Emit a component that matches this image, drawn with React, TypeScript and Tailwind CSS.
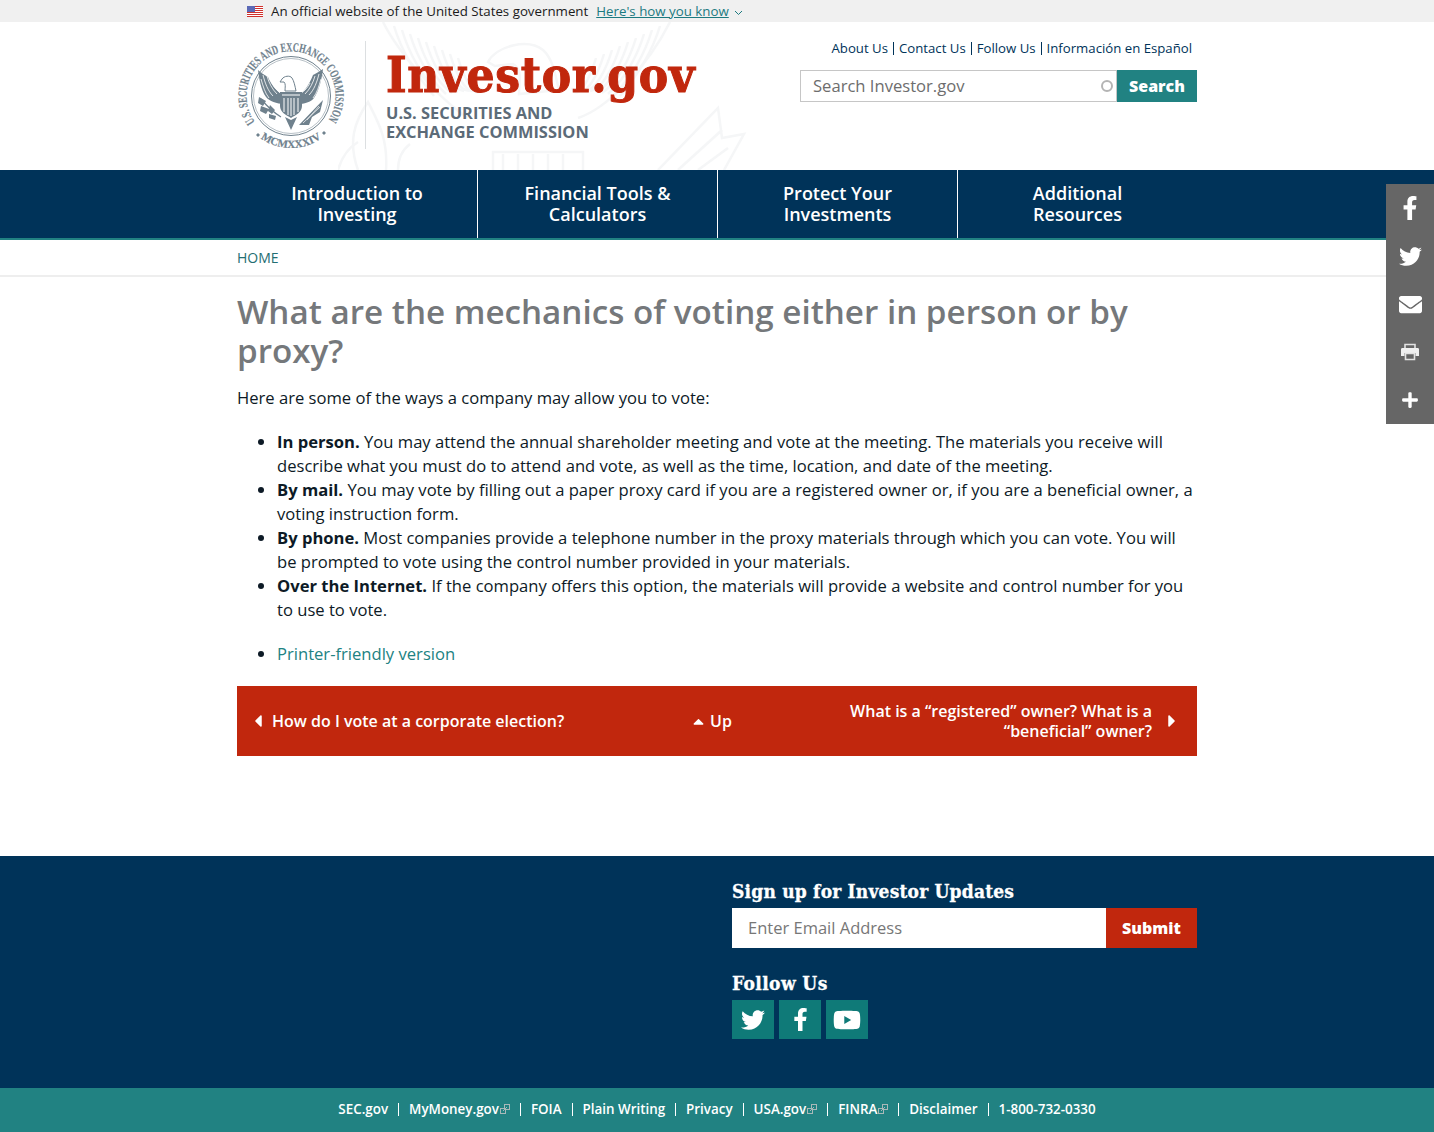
import React from "react";
import { FaFacebookF, FaTwitter, FaEnvelope, FaPlus, FaYoutube, FaCaretLeft, FaCaretRight, FaCaretUp } from "react-icons/fa";

const OS = "font-['Open_Sans',sans-serif]";
const SLAB = "font-['DejaVu_Serif_Condensed','DejaVu_Serif',serif]";

function Flag() {
  const stripes = [0, 2, 4, 6, 8, 10];
  return (
    <svg width="16" height="11" viewBox="0 0 16 11" className="shrink-0">
      <rect width="16" height="11" fill="#fff" />
      {stripes.map((y) => <rect key={y} y={y} width="16" height="1" fill="#d0312d" />)}
      <rect width="8" height="6" fill="#2d3f9e" />
      {[1, 3, 5, 7].map((x) => [1, 3, 5].map((y) => <rect key={`${x}${y}`} x={x - 0.5} y={y - 0.5} width="1" height="1" fill="#e8e8ff" />))}
    </svg>
  );
}

function Seal() {
  const c = "#6f818d";
  return (
    <svg width="110" height="110" viewBox="0 0 110 110" className="shrink-0">
      <defs>
        <path id="sealTop" d="M 18 81 A 44.5 44.5 0 1 1 90 81" />
        <path id="sealBottom" d="M 22 96 A 52 52 0 0 0 86 96" />
      </defs>
      <circle cx="54" cy="55" r="39.5" fill="none" stroke={c} strokeWidth="1" />
      <circle cx="54" cy="55" r="37.5" fill="none" stroke={c} strokeWidth=".5" />
      <text fontFamily="'Liberation Serif',serif" fontSize="12.5" fontWeight="700" fill={c} stroke={c} strokeWidth=".2">
        <textPath href="#sealTop" textLength="193" lengthAdjust="spacingAndGlyphs">U.S. SECURITIES AND EXCHANGE COMMISSION</textPath>
      </text>
      <text fontFamily="'Liberation Serif',serif" fontSize="11" fontWeight="700" fill={c} stroke={c} strokeWidth=".2">
        <textPath href="#sealBottom" startOffset="50%" textAnchor="middle">MCMXXXIV</textPath>
      </text>
      <path d="M21 92l2 2-2 2-2-2zM87 90l2 2-2 2-2-2z" fill={c} />
      {/* left wing */}
      <path d="M47 54C42 53 34 44 31 36 26 33 23 31 21 29c1 8 3 20 8 27 3 4 11 7 18 7z" fill={c} />
      <path d="M26 34c2 8 5 16 10 21M30 35c2 7 5 13 10 18M35 42c2 4 5 8 9 10M24 38c2 7 4 14 8 19" stroke="#fff" strokeWidth=".8" fill="none" />
      {/* right wing */}
      <path d="M61 54c5-1 11-10 15-20 4-2 7-4 10-6-1 9-4 22-9 29-3 4-10 6-16 6z" fill={c} />
      <path d="M82 33c-2 8-5 16-10 21M78 35c-2 7-5 13-10 18M73 42c-2 4-5 8-9 10M84 38c-2 7-4 14-8 19" stroke="#fff" strokeWidth=".8" fill="none" />
      {/* head */}
      <path d="M45 38c2-3 8-4 10-1 2 3 3 8 4 13l-11 0c0-4 1-7-1-9l-4 0z" fill="#fff" stroke={c} strokeWidth="1" />
      {/* shield */}
      <path d="M43 51h22v14c0 6-6 9-11 12-5-3-11-6-11-12z" fill={c} />
      <path d="M47 57v14M51 57v17M54 57v18M57 57v17M61 57v14" stroke="#fff" strokeWidth="1" />
      <path d="M45 54h18" stroke="#fff" strokeWidth="1" />
      {/* tail */}
      <path d="M48 76l6 13 6-13-6 3z" fill={c} />
      {/* left branch */}
      <path d="M24 58c5 6 10 12 20 18" stroke={c} strokeWidth="1.2" fill="none" />
      <path d="M22 56l7 4-3 5-5-3zM24 65l8 3-3 5-6-3zM33 64l5 5-3 4-4-3zM32 73l7 2-1 4-6-2z" fill={c} />
      {/* right arrows */}
      <path d="M62 84l24-25-3 12-8 5-3 8z" fill={c} />
      <path d="M66 82l17-16M70 79l12-14" stroke="#fff" strokeWidth=".7" />
    </svg>
  );
}

function Watermark() {
  const s = "#f5f6f7";
  const feathers = Array.from({ length: 9 });
  return (
    <svg width="410" height="148" viewBox="0 0 410 148" className="absolute left-[338px] top-[0px] pointer-events-none">
      <g fill="none" stroke={s} strokeWidth="2.5">
        <path d="M150 40c8-16 40-24 55-12 10 9 12 24 16 40l-40 4c0-14 4-24-6-30l-18 2z" />
        <path d="M155 148V130h90v18" />
        {[165, 180, 195, 210, 225].map((x) => <path key={x} d={`M${x} 132v16`} />)}
        <path d="M130 96C100 76 60 30 45 0" />
        <path d="M240 96c30-10 70-52 92-96" />
        {feathers.map((_, i) => <path key={i} d={`M${56 + i * 8} ${4 + i * 4}c6 20 18 44 ${40 - i * 2} ${70 - i * 5}`} />)}
        {feathers.map((_, i) => <path key={`r${i}`} d={`M${322 - i * 8} ${4 + i * 4}c-6 20-18 44-${40 - i * 2} ${70 - i * 5}`} />)}
        <path d="M20 148C10 120 16 100 30 80c10 20 20 36 18 68" />
        <path d="M0 148c4-14 10-22 20-28M60 148c0-12 4-20 12-26" />
        <path d="M320 148l60-62 4 30 22-4-20 36" />
        <path d="M340 148l44-40M360 148l30-22" />
      </g>
    </svg>
  );
}

function PrintIcon() {
  return (
    <svg width="20" height="18" viewBox="0 0 20 18" fill="none">
      <path d="M5 5V1.5h10V5" stroke="#e2e2e2" strokeWidth="1.6" />
      <path d="M1 6.5c0-1 .5-1.5 1.5-1.5h15c1 0 1.5.5 1.5 1.5V13h-3.5v-3h-11v3H1z" fill="#f0f0f0" />
      <path d="M5.5 10.5h9v6h-9z" stroke="#e2e2e2" strokeWidth="1.6" />
    </svg>
  );
}

function Share() {
  const items = [
    <FaFacebookF key="f" className="text-[24px]" />,
    <FaTwitter key="t" className="text-[23px]" />,
    <FaEnvelope key="e" className="text-[23px]" />,
    <PrintIcon key="p" />,
    <FaPlus key="a" className="text-[18px]" />,
  ];
  return (
    <div className="absolute right-0 top-[184px] w-[48px] bg-[#666666] text-white flex flex-col z-10">
      {items.map((it, i) => <div key={i} className="h-[48px] flex items-center justify-center">{it}</div>)}
    </div>
  );
}

function Ext() {
  return (
    <svg width="10" height="10" viewBox="0 0 10 10" className="inline-block ml-[1px] -mt-[2px]" fill="none" stroke="#a9b9b9" strokeWidth="1">
      <rect x="4.5" y="0.5" width="5" height="5" />
      <rect x="0.5" y="4.5" width="5" height="5" />
      <path d="M3 7l4-4" />
    </svg>
  );
}

function Wrap({ children, className = "" }: { children: React.ReactNode; className?: string }) {
  return <div className={`w-[960px] ml-[237px] ${className}`}>{children}</div>;
}

export default function App() {
  const nav = [["Introduction to", "Investing"], ["Financial Tools &", "Calculators"], ["Protect Your", "Investments"], ["Additional", "Resources"]];
  const top = ["About Us", "Contact Us", "Follow Us", "Información en Español"];
  const foot: [string, boolean][] = [["SEC.gov", false], ["MyMoney.gov", true], ["FOIA", false], ["Plain Writing", false], ["Privacy", false], ["USA.gov", true], ["FINRA", true], ["Disclaimer", false], ["1-800-732-0330", false]];
  const list: [string, string][] = [
    ["In person.", " You may attend the annual shareholder meeting and vote at the meeting. The materials you receive will describe what you must do to attend and vote, as well as the time, location, and date of the meeting."],
    ["By mail.", " You may vote by filling out a paper proxy card if you are a registered owner or, if you are a beneficial owner, a voting instruction form."],
    ["By phone.", " Most companies provide a telephone number in the proxy materials through which you can vote. You will be prompted to vote using the control number provided in your materials."],
    ["Over the Internet.", " If the company offers this option, the materials will provide a website and control number for you to use to vote."],
  ];
  return (
    <div className={`${OS} relative w-[1434px] h-[1132px] overflow-hidden bg-white text-[#0d1a26]`}>
      <Share />
      {/* gov banner */}
      <div className="h-[22px] bg-[#f0f0f0]">
        <div className="ml-[247px] h-full pt-[1px] flex items-center text-[13.3px] text-[#1b1b1b]">
          <Flag />
          <span className="ml-[8px]">An official website of the United States government</span>
          <span className="ml-[8px] text-[#1c7a80] underline">Here's how you know</span>
          <svg width="9" height="6" viewBox="0 0 9 6" className="ml-[5px] mt-[2px]" fill="none" stroke="#1c7a80" strokeWidth="1"><path d="M1 1l3.5 3.5L8 1" /></svg>
        </div>
      </div>
      {/* header */}
      <div className="h-[148px] relative overflow-hidden">
        <Watermark />
        <Wrap className="relative flex h-full">
          <div className="flex pt-[19px] h-full">
            <Seal />
            <div className="w-px h-[108px] bg-[#dcdfe1] ml-[18px]" />
            <div className="ml-[20px] pt-[9px]">
              <div className={`${SLAB} text-[#c1270d] text-[49px] leading-[50px] font-bold tracking-[0.7px] [-webkit-text-stroke:1px_#c1270d]`}>Investor.gov</div>
              <div className="mt-[3px] text-[#5c6b78] text-[16.4px] leading-[19px] font-bold">U.S. SECURITIES AND<br />EXCHANGE COMMISSION</div>
            </div>
          </div>
          <div className="ml-auto w-[397px] pt-[20px]">
            <div className="flex justify-end pr-[5px] text-[13.2px] leading-[16px] text-[#003359]">
              {top.map((t, i) => (
                <span key={t} className={i ? "ml-[5px] pl-[5px] border-l border-[#003359] leading-[13px] my-auto" : "leading-[13px] my-auto"}>{t}</span>
              ))}
            </div>
            <div className="flex h-[32px] mt-[15px]">
              <div className="flex-1 border border-[#c6c6c6] flex items-center pl-[12px] pr-[3px] text-[16.6px] text-[#6d6d6d] bg-white">
                <span>Search Investor.gov</span>
                <span className="ml-auto w-[12px] h-[12px] rounded-full border-2 border-[#b4b4b4]" />
              </div>
              <div className="w-[80px] bg-[#218282] text-white font-extrabold text-[16px] flex items-center justify-center">Search</div>
            </div>
          </div>
        </Wrap>
      </div>
      {/* nav */}
      <div className="h-[70px] bg-[#003359] border-b-2 border-[#218282]">
        <Wrap className="flex h-full">
          {nav.map((n, i) => (
            <div key={n[0]} className={`w-[240px] flex flex-col items-center justify-center text-white text-[18px] leading-[21px] font-semibold ${i > 0 ? "border-l border-white" : ""}`}>
              <span>{n[0]}</span><span>{n[1]}</span>
            </div>
          ))}
        </Wrap>
      </div>
      {/* breadcrumb */}
      <div className="h-[37px] border-b-2 border-[#eeeeee]">
        <Wrap className="h-full flex items-center text-[14px] text-[#246e72] font-medium">HOME</Wrap>
      </div>
      {/* main */}
      <Wrap className="pt-[15px]">
        <h1 className="text-[33.2px] leading-[39px] font-semibold text-[#75787b]">What are the mechanics of voting either in person or by proxy?</h1>
        <p className="mt-[16px] text-[16.6px] leading-[24px]">Here are some of the ways a company may allow you to vote:</p>
        <ul className="mt-[20px] pl-[40px] list-disc text-[16.6px] leading-[24px]">
          {list.map(([b, t]) => <li key={b}><b className="font-bold">{b}</b>{t}</li>)}
        </ul>
        <ul className="mt-[20px] pl-[40px] list-disc text-[16.6px] leading-[24px]">
          <li className="text-[#0d1a26]"><span className="text-[#218282]">Printer-friendly version</span></li>
        </ul>
        <div className="mt-[20px] h-[70px] bg-[#c1270d] text-white flex items-center text-[16px] leading-[20px] font-semibold">
          <div className="w-[456px] flex items-center pl-[14px]">
            <FaCaretLeft className="text-[20px] w-[14px] shrink-0" />
            <span className="ml-[7px]">How do I vote at a corporate election?</span>
          </div>
          <div className="flex items-center ml-[-3px]">
            <FaCaretUp className="text-[17px]" />
            <span className="ml-[3px]">Up</span>
          </div>
          <div className="ml-auto flex items-center pr-[18px]">
            <span className="w-[345px] text-right">What is a “registered” owner? What is a “beneficial” owner?</span>
            <FaCaretRight className="ml-[13px] text-[20px] w-[14px] shrink-0" />
          </div>
        </div>
      </Wrap>
      {/* footer */}
      <div className="mt-[100px] h-[232px] bg-[#003359] text-white">
        <div className="ml-[732px] w-[465px] pt-[23px]">
          <h2 className={`${SLAB} text-[19px] leading-[24px] font-bold tracking-[0.2px] [-webkit-text-stroke:0.3px_#fff]`}>Sign up for Investor Updates</h2>
          <div className="flex h-[40px] mt-[5px]">
            <div className="flex-1 bg-white text-[#777777] text-[16.5px] flex items-center pl-[16px]">Enter Email Address</div>
            <div className="w-[91px] bg-[#c1270d] text-white font-extrabold text-[16px] flex items-center justify-center">Submit</div>
          </div>
          <h2 className={`${SLAB} text-[19px] leading-[24px] font-bold tracking-[0.4px] mt-[23px] [-webkit-text-stroke:0.3px_#fff]`}>Follow Us</h2>
          <div className="flex gap-[5px] mt-[5px]">
            <div className="w-[42px] h-[39px] bg-[#0f7a78] flex items-center justify-center"><FaTwitter className="text-[24px]" /></div>
            <div className="w-[42px] h-[39px] bg-[#0f7a78] flex items-center justify-center"><FaFacebookF className="text-[23px]" /></div>
            <div className="w-[42px] h-[39px] bg-[#0f7a78] flex items-center justify-center"><FaYoutube className="text-[28px]" /></div>
          </div>
        </div>
      </div>
      <div className="h-[44px] pb-[2px] bg-[#218282] flex items-center justify-center text-white text-[13.4px] font-semibold">
        {foot.map(([t, ext], i) => (
          <span key={t} className={i ? "ml-[10px] pl-[10px] border-l border-white leading-[13px]" : "leading-[13px]"}>
            {t}{ext && <Ext />}
          </span>
        ))}
      </div>
    </div>
  );
}
